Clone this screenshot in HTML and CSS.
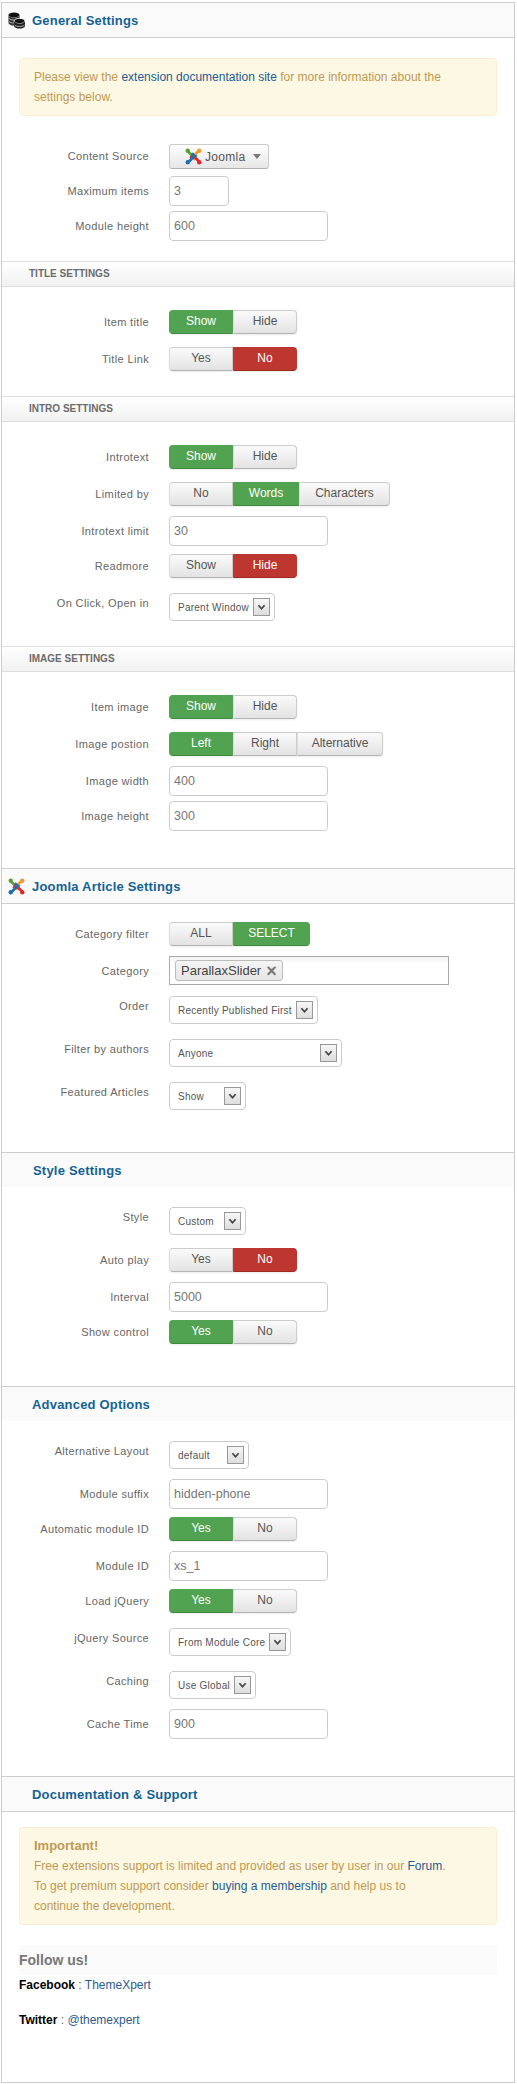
FILE: index.html
```html
<!DOCTYPE html>
<html lang="en">
<head>
  <meta charset="UTF-8" />
  <meta name="viewport" content="width=device-width, initial-scale=1.0" />
  <title>Module Settings</title>
  <link rel="stylesheet" href="styles.css">
</head>
<body>
  <svg class="defs" width="0" height="0">
    <symbol id="joomla" viewBox="0 0 16 16">
      <g fill="none" stroke-width="2.5">
        <path stroke="#5d9f32" d="M3 3.500 L8.500 9 L11 6.500" />
        <path stroke="#f39a2c" transform="rotate(90 8 8)" d="M3 3.500 L8.500 9 L11 6.500" />
        <path stroke="#e3262b" transform="rotate(180 8 8)" d="M3 3.500 L8.500 9 L11 6.500" />
        <path stroke="#1c6fb5" transform="rotate(270 8 8)" d="M3 3.500 L8.500 9 L11 6.500" />
      </g>
      <circle cx="2.600" cy="2.600" r="2.100" fill="#5d9f32" />
      <circle cx="13.400" cy="2.600" r="2.100" fill="#f39a2c" />
      <circle cx="13.400" cy="13.400" r="2.100" fill="#e3262b" />
      <circle cx="2.600" cy="13.400" r="2.100" fill="#1c6fb5" />
    </symbol>
    <symbol id="arrow" viewBox="0 0 17 18">
      <path d="M5 7 L8.500 11 L12 7" fill="none" stroke="#444" stroke-width="2" />
    </symbol>
  </svg>

  <div class="panel">
    <h2 class="section-head"><svg class="head-icon" viewBox="0 0 17 17">
        <ellipse cx="6" cy="3" rx="5.500" ry="2.600" fill="#111" />
        <path d="M.5 3v8c0 1.500 2.500 2.600 5.500 2.600s5.500-1.100 5.500-2.600V3c0 1.500-2.500 2.600-5.500 2.600S.5 4.500.5 3z" fill="#333" />
        <path d="M1 6.500c1 1 3 1.500 5 1.500s4-.5 5-1.500M1 9.500c1 1 3 1.500 5 1.500s4-.5 5-1.500" fill="none" stroke="#ccc" stroke-width=".8" />
        <ellipse cx="11.500" cy="9" rx="5.500" ry="2.600" fill="#111" stroke="#fff" stroke-width=".8" />
        <path d="M6 9v5c0 1.500 2.500 2.600 5.500 2.600s5.500-1.100 5.500-2.600V9c0 1.500-2.500 2.600-5.500 2.600S6 10.500 6 9z" fill="#222" />
        <path d="M6.500 13c1 1 3 1.500 5 1.500s4-.5 5-1.500" fill="none" stroke="#ccc" stroke-width=".8" />
      </svg>General Settings</h2>
    <div class="fields fields-first">
      <div class="alert">Please view the <a href="#">extension documentation site</a> for more information about the<br>
        settings below.</div>
      <div class="row">
        <label>Content Source</label>
        <button class="dropdown"><svg class="j-icon"><use href="#joomla" /></svg>Joomla<span class="caret"></span></button>
      </div>
      <div class="row">
        <label>Maximum items</label>
        <input class="input input-mini" type="text" value="3" />
      </div>
      <div class="row">
        <label>Module height</label>
        <input class="input" type="text" value="600" />
      </div>
    </div>

    <h3 class="sub-head">Title Settings</h3>
    <div class="fields fields-sub">
      <div class="row">
        <label>Item title</label>
        <div class="switch"><span class="on">Show</span><span>Hide</span></div>
      </div>
      <div class="row">
        <label>Title Link</label>
        <div class="switch"><span>Yes</span><span class="off">No</span></div>
      </div>
    </div>

    <h3 class="sub-head">Intro Settings</h3>
    <div class="fields fields-sub">
      <div class="row">
        <label>Introtext</label>
        <div class="switch"><span class="on">Show</span><span>Hide</span></div>
      </div>
      <div class="row">
        <label>Limited by</label>
        <div class="switch"><span>No</span><span class="on w66">Words</span><span class="w91">Characters</span></div>
      </div>
      <div class="row">
        <label>Introtext limit</label>
        <input class="input" type="text" value="30" />
      </div>
      <div class="row">
        <label>Readmore</label>
        <div class="switch"><span>Show</span><span class="off">Hide</span></div>
      </div>
      <div class="row">
        <label>On Click, Open in</label>
        <div class="select"><span>Parent Window</span><svg class="arrow"><use href="#arrow" /></svg></div>
      </div>
    </div>

    <h3 class="sub-head">Image Settings</h3>
    <div class="fields fields-sub fields-last">
      <div class="row">
        <label>Item image</label>
        <div class="switch"><span class="on">Show</span><span>Hide</span></div>
      </div>
      <div class="row">
        <label>Image postion</label>
        <div class="switch"><span class="on">Left</span><span>Right</span><span class="w86">Alternative</span></div>
      </div>
      <div class="row">
        <label>Image width</label>
        <input class="input" type="text" value="400" />
      </div>
      <div class="row">
        <label>Image height</label>
        <input class="input" type="text" value="300" />
      </div>
    </div>

    <h2 class="section-head"><svg class="head-icon"><use href="#joomla" /></svg>Joomla Article Settings</h2>
    <div class="fields fields-last">
      <div class="row">
        <label>Category filter</label>
        <div class="switch"><span>ALL</span><span class="on w77">SELECT</span></div>
      </div>
      <div class="row">
        <label>Category</label>
        <div class="chosen"><span class="tag">ParallaxSlider<b>&times;</b></span></div>
      </div>
      <div class="row">
        <label>Order</label>
        <div class="select"><span>Recently Published First</span><svg class="arrow"><use href="#arrow" /></svg></div>
      </div>
      <div class="row">
        <label>Filter by authors</label>
        <div class="select select-lg"><span>Anyone</span><svg class="arrow"><use href="#arrow" /></svg></div>
      </div>
      <div class="row">
        <label>Featured Articles</label>
        <div class="select select-sm"><span>Show</span><svg class="arrow"><use href="#arrow" /></svg></div>
      </div>
    </div>

    <h2 class="section-head section-plain style-head">Style Settings</h2>
    <div class="fields fields-last">
      <div class="row">
        <label>Style</label>
        <div class="select select-sm"><span>Custom</span><svg class="arrow"><use href="#arrow" /></svg></div>
      </div>
      <div class="row">
        <label>Auto play</label>
        <div class="switch"><span>Yes</span><span class="off">No</span></div>
      </div>
      <div class="row">
        <label>Interval</label>
        <input class="input" type="text" value="5000" />
      </div>
      <div class="row">
        <label>Show control</label>
        <div class="switch"><span class="on">Yes</span><span>No</span></div>
      </div>
    </div>

    <h2 class="section-head section-plain">Advanced Options</h2>
    <div class="fields fields-last">
      <div class="row">
        <label>Alternative Layout</label>
        <div class="select select-def"><span>default</span><svg class="arrow"><use href="#arrow" /></svg></div>
      </div>
      <div class="row">
        <label>Module suffix</label>
        <input class="input" type="text" value="hidden-phone" />
      </div>
      <div class="row">
        <label>Automatic module ID</label>
        <div class="switch"><span class="on">Yes</span><span>No</span></div>
      </div>
      <div class="row">
        <label>Module ID</label>
        <input class="input" type="text" value="xs_1" />
      </div>
      <div class="row">
        <label>Load jQuery</label>
        <div class="switch"><span class="on">Yes</span><span>No</span></div>
      </div>
      <div class="row">
        <label>jQuery Source</label>
        <div class="select"><span>From Module Core</span><svg class="arrow"><use href="#arrow" /></svg></div>
      </div>
      <div class="row">
        <label>Caching</label>
        <div class="select"><span>Use Global</span><svg class="arrow"><use href="#arrow" /></svg></div>
      </div>
      <div class="row">
        <label>Cache Time</label>
        <input class="input" type="text" value="900" />
      </div>
    </div>

    <h2 class="section-head section-doc">Documentation &amp; Support</h2>
    <div class="support">
      <div class="alert alert-support">
        <strong>Important!</strong><br>
        Free extensions support is limited and provided as user by user in our <a href="#">Forum</a>.<br>
        To get premium support consider <a href="#">buying a membership</a> and help us to<br>
        continue the development.
      </div>
      <h4 class="follow">Follow us!</h4>
      <p class="social"><b>Facebook</b> : <a href="#">ThemeXpert</a></p>
      <p class="social"><b>Twitter</b> : <a href="#">@themexpert</a></p>
    </div>
  </div>
</body>
</html>
```

FILE: styles.css
```css
* {
  box-sizing: border-box;
}

body {
  margin: 2px 2px 1px 1px;
  font-family: "Liberation Sans", Arial, sans-serif;
  font-size: 12px;
  background: #fff;
  color: #555;
}

a {
  color: #1f5a94;
  text-decoration: none;
}

.defs {
  position: absolute;
}

.panel {
  height: 2081px;
  border: 1px solid #ccc;
}

/* section headers */
.section-head {
  display: flex;
  align-items: center;
  height: 35px;
  margin: 0;
  padding-left: 6px;
  background: #fafafa;
  border-bottom: 1px solid #ccc;
  color: #146295;
  font-size: 13px;
  font-weight: bold;
  letter-spacing: 0.2px;
}

.fields + .section-head {
  height: 36px;
  border-top: 1px solid #ccc;
}

.head-icon {
  width: 17px;
  height: 17px;
  margin-right: 7px;
}

.fields + .section-plain {
  height: 35px;
  padding-left: 30px;
  border-bottom: 0;
}

.fields + .style-head {
  padding-left: 31px;
}

.fields + .section-doc {
  padding-left: 30px;
}

.sub-head {
  height: 26px;
  margin: 0;
  padding-left: 27px;
  border-top: 1px solid #ddd;
  border-bottom: 1px solid #ddd;
  background: linear-gradient(#fff, #f1f1f1);
  color: #6b6b6b;
  font-size: 10px;
  font-weight: bold;
  line-height: 24px;
  text-transform: uppercase;
}

/* form rows */
.fields {
  padding: 15px 0;
}

.fields-first {
  padding: 20px 17px 15px;
}

.fields-sub {
  padding-top: 20px;
}

.fields-last {
  padding-bottom: 32px;
}

.row {
  display: flex;
  align-items: flex-start;
  margin-bottom: 5px;
}

.row label {
  flex: none;
  width: 147px;
  margin-right: 20px;
  padding-top: 5px;
  color: #666;
  font-size: 11px;
  line-height: 20px;
  letter-spacing: 0.35px;
  text-align: right;
}

.fields-first .row label {
  width: 130px;
}

.input {
  width: 159px;
  height: 30px;
  padding: 0 4px;
  border: 1px solid #ccc;
  border-radius: 4px;
  color: #777;
  font-family: inherit;
  font-size: 12.5px;
}

.input-mini {
  width: 60px;
}

.dropdown {
  display: flex;
  align-items: center;
  width: 100px;
  height: 25px;
  margin: 3px 0 2px;
  padding: 0 0 0 15px;
  border: 1px solid #ccc;
  border-bottom-color: #b3b3b3;
  border-radius: 3px;
  background: linear-gradient(#fff, #e6e6e6);
  color: #555;
  font-family: inherit;
  font-size: 12px;
  letter-spacing: 0.3px;
}

.j-icon {
  width: 17px;
  height: 17px;
  margin-right: 3px;
}

.caret {
  margin-left: 8px;
  border-top: 5px solid #777;
  border-left: 4px solid transparent;
  border-right: 4px solid transparent;
}

/* on/off switch */
.switch {
  display: flex;
  height: 24px;
  margin: 3px 0 5px;
  border-radius: 4px;
  box-shadow: 0 1px 2px rgba(0, 0, 0, 0.08);
}

.switch span {
  width: 64px;
  border: 1px solid #ccc;
  border-left-color: #ddd;
  border-bottom-color: #b3b3b3;
  background: linear-gradient(#fafafa, #e3e3e3);
  color: #555;
  line-height: 21px;
  text-align: center;
}

.switch span:first-child {
  border-radius: 4px 0 0 4px;
}

.switch span:last-child {
  border-radius: 0 4px 4px 0;
}

.switch .on {
  border-color: #51a351;
  border-bottom-color: #3e8a3e;
  background: #51a351;
  color: #fff;
}

.switch .off {
  border-color: #bd362f;
  border-bottom-color: #a02a24;
  background: #bd362f;
  color: #fff;
}

.switch .w66 {
  width: 66px;
}

.switch .w77 {
  width: 77px;
}

.switch .w86 {
  width: 86px;
}

.switch .w91 {
  width: 91px;
}

/* old style select box */
.select {
  display: flex;
  align-items: center;
  justify-content: space-between;
  height: 28px;
  margin: 5px 0;
  padding: 0 4px 0 8px;
  border: 1px solid #ccc;
  border-radius: 4px;
  color: #555;
  font-size: 10px;
  letter-spacing: 0.25px;
}

.select span {
  margin-right: 4px;
  padding-top: 1px;
}

.select-sm {
  width: 77px;
}

.select-lg {
  width: 173px;
}

.select-def {
  width: 80px;
}

.arrow {
  flex: none;
  width: 17px;
  height: 18px;
  border: 1px solid #999;
  background: linear-gradient(#f6f6f6, #ddd);
}

/* category picker */
.chosen {
  width: 280px;
  height: 29px;
  margin-bottom: 1px;
  padding: 3px 5px;
  border: 1px solid #aaa;
  background: linear-gradient(#f2f2f2, #fff 25%);
}

.tag {
  display: inline-flex;
  align-items: center;
  height: 21px;
  padding: 0 5px;
  border: 1px solid #bbb;
  border-radius: 3px;
  background: linear-gradient(#f4f4f4, #e6e6e6);
  color: #444;
  font-size: 13px;
}

.tag b {
  margin-left: 5px;
  color: #777;
  font-size: 18px;
  line-height: 18px;
}

/* notices */
.alert {
  height: 58px;
  margin: 0 0 25px;
  padding: 8px 14px;
  border: 1px solid #fbeed5;
  border-radius: 4px;
  background: #fcf8e3;
  color: #c09853;
  line-height: 20px;
}

.support {
  padding: 15px 17px 0;
}

.alert-support {
  height: 98px;
  margin-bottom: 20px;
  padding-top: 8px;
}

.alert-support strong {
  font-size: 13px;
}

.follow {
  height: 30px;
  margin: 0;
  background: #fafafa;
  color: #777;
  font-size: 14px;
  line-height: 30px;
}

.social {
  margin: 0 0 15px;
  color: #555;
  line-height: 20px;
}

.social b {
  color: #000;
}

.social a {
  color: #2c5a8c;
}
```
